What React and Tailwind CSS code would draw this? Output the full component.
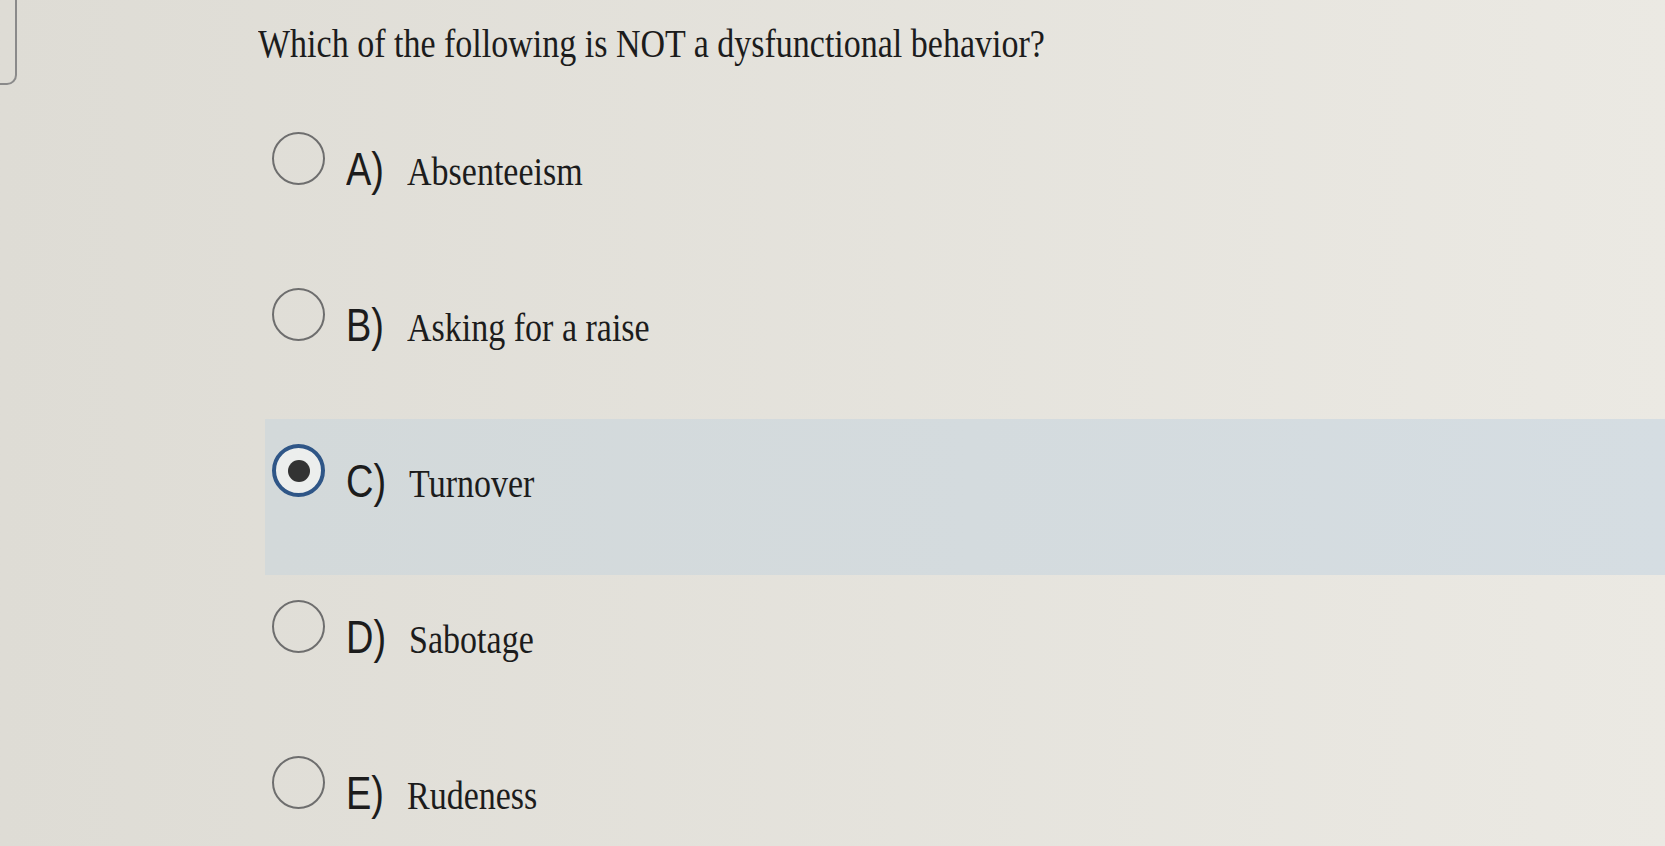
import React from "react";

const options = [
    { key: "A)", text: "Absenteeism" },
    { key: "B)", text: "Asking for a raise" },
    { key: "C)", text: "Turnover", selected: true },
    { key: "D)", text: "Sabotage" },
    { key: "E)", text: "Rudeness" },
];

function Radio({ selected }) {
    if (selected) {
        return (
            <div className="mt-[25px] flex size-[53px] shrink-0 items-center justify-center rounded-full border-[4px] border-[#2f5687] bg-[#eceeed]">
                <div className="size-[22px] rounded-full bg-[#333333]" />
            </div>
        );
    }
    return <div className="mt-[25px] size-[53px] shrink-0 rounded-full border-2 border-[#6e6e6e]" />;
}

export default function App() {
    return (
        <div className="flex h-[846px] w-full overflow-hidden bg-linear-to-r from-[#dedcd5] to-[#ebe9e3] text-[#1c1c1c]">
            <div className="h-[85px] w-[17px] shrink-0 rounded-br-[10px] border-r-2 border-b-2 border-[#8a8a8a]" />
            <div className="flex flex-1 flex-col">
                <div className="pt-[30px] pl-[241px]">
                    <span className="inline-block origin-bottom scale-y-[1.2] font-['Liberation_Serif',serif] text-[34px] leading-[34px]">
                        Which of the following is NOT a dysfunctional behavior?
                    </span>
                </div>
                <div className="mt-[43px] ml-[248px] flex flex-col">
                    {options.map(o => (
                        <div
                            key={o.key}
                            className={
                                "flex h-[156px] items-start pl-[7px] " +
                                (o.selected ? "bg-linear-to-r from-[#d3d9da] to-[#d5dde2]" : "")
                            }
                        >
                            <Radio selected={o.selected} />
                            <div className="mt-[47px] ml-[21px] flex items-baseline">
                                <span className="inline-block origin-bottom scale-y-[1.2] font-['Liberation_Sans',Arial,sans-serif] text-[38px] leading-[38px]">
                                    {o.key}
                                </span>
                                <span className="ml-[23px] inline-block origin-bottom scale-y-[1.2] font-['Liberation_Serif',serif] text-[34px] leading-[34px]">
                                    {o.text}
                                </span>
                            </div>
                        </div>
                    ))}
                </div>
            </div>
        </div>
    );
}
